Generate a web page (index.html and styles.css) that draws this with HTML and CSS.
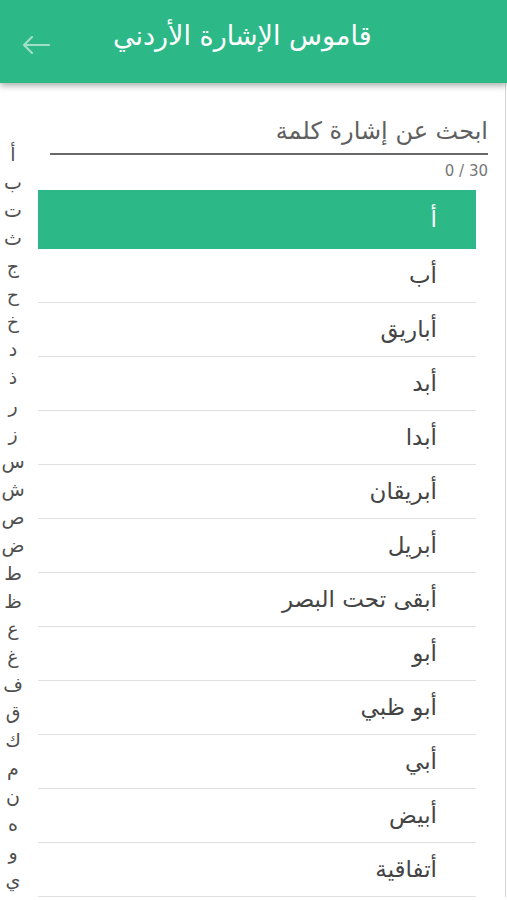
FILE: index.html
```html
<!DOCTYPE html>
<html lang="ar">
<head>
    <meta charset="UTF-8">
    <meta name="viewport" content="width=device-width, initial-scale=1.0">
    <title>قاموس الإشارة الأردني</title>
    <link rel="stylesheet" href="styles.css">
</head>
<body>
    <header class="app-bar">
        <a class="back" href="#" aria-label="رجوع">
            <svg width="28" height="18" viewBox="0 0 28 18">
                <path d="M27 9H2M10 1L2 9l8 8" fill="none" stroke="currentColor" stroke-width="2.2" stroke-linecap="round" stroke-linejoin="round"/>
            </svg>
        </a>
        <h1 class="title">قاموس الإشارة الأردني</h1>
    </header>

    <div class="page">
        <ul class="alphabet">
            <li>أ</li><li>ب</li><li>ت</li><li>ث</li><li>ج</li><li>ح</li><li>خ</li>
            <li>د</li><li>ذ</li><li>ر</li><li>ز</li><li>س</li><li>ش</li><li>ص</li>
            <li>ض</li><li>ط</li><li>ظ</li><li>ع</li><li>غ</li><li>ف</li><li>ق</li>
            <li>ك</li><li>م</li><li>ن</li><li>ه</li><li>و</li><li>ي</li>
        </ul>

        <main class="content" dir="rtl">
            <div class="search">
                <input type="text" class="search-input" placeholder="ابحث عن إشارة كلمة" maxlength="30">
                <div class="counter" dir="ltr">0 / 30</div>
            </div>

            <ul class="words">
                <li class="word active">أ</li>
                <li class="word">أب</li>
                <li class="word">أباريق</li>
                <li class="word">أبد</li>
                <li class="word">أبدا</li>
                <li class="word">أبريقان</li>
                <li class="word">أبريل</li>
                <li class="word">أبقى تحت البصر</li>
                <li class="word">أبو</li>
                <li class="word">أبو ظبي</li>
                <li class="word">أبي</li>
                <li class="word">أبيض</li>
                <li class="word">أتفاقية</li>
            </ul>
        </main>
    </div>
</body>
</html>
```

FILE: styles.css
```css
/* قاموس الإشارة - قائمة الكلمات */
body {
    font-family: "DejaVu Sans", "Noto Sans", sans-serif;
    margin: 0;
    padding: 0;
    background: #fff;
    height: 900px;
    overflow: hidden;
}
.app-bar {
    position: relative;
    z-index: 2;
    height: 83px;
    background: #2db888;
    display: flex;
    align-items: center;
    padding-left: 22px;
    box-shadow: 0 3px 6px rgba(0, 0, 0, 0.3);
}
.back {
    color: rgba(255, 255, 255, 0.55);
    display: flex;
    margin-top: 6px;
}
.title {
    margin: 0 0 12px 63px;
    color: #fff;
    font-size: 27px;
    font-weight: normal;
}
.page {
    display: flex;
    margin-right: 1px;
    border-right: 1px solid #d6d6d6;
}
.alphabet {
    list-style: none;
    margin: 0;
    padding: 58px 0 0;
    width: 26px;
    flex-shrink: 0;
    text-align: center;
    color: #4f4f4f;
    font-size: 19px;
    line-height: 27.9px;
}
.content {
    flex: 1;
    padding: 22px 17px 0 12px;
}
.search-input {
    display: block;
    box-sizing: border-box;
    margin: 0 0 0 12px;
    width: calc(100% - 12px);
    height: 50px;
    padding: 10px 0 6px;
    border: none;
    border-bottom: 2px solid #6a6a6a;
    outline: none;
    font-family: inherit;
    font-size: 24px;
    color: #444;
    direction: rtl;
    background: transparent;
}
.search-input::placeholder {
    color: #5f5f5f;
}
.counter {
    margin-top: 7px;
    height: 18px;
    line-height: 18px;
    font-size: 15px;
    color: #777;
    text-align: right;
}
.words {
    list-style: none;
    margin: 10px 12px 0 0;
    padding: 0;
}
.word {
    height: 53px;
    line-height: 53px;
    padding-right: 39px;
    border-bottom: 1px solid #e0e0e0;
    font-size: 23px;
    color: #444;
}
.word.active {
    height: 58px;
    line-height: 58px;
    background: #2db888;
    border-bottom-color: #2db888;
    color: #fff;
}
```
